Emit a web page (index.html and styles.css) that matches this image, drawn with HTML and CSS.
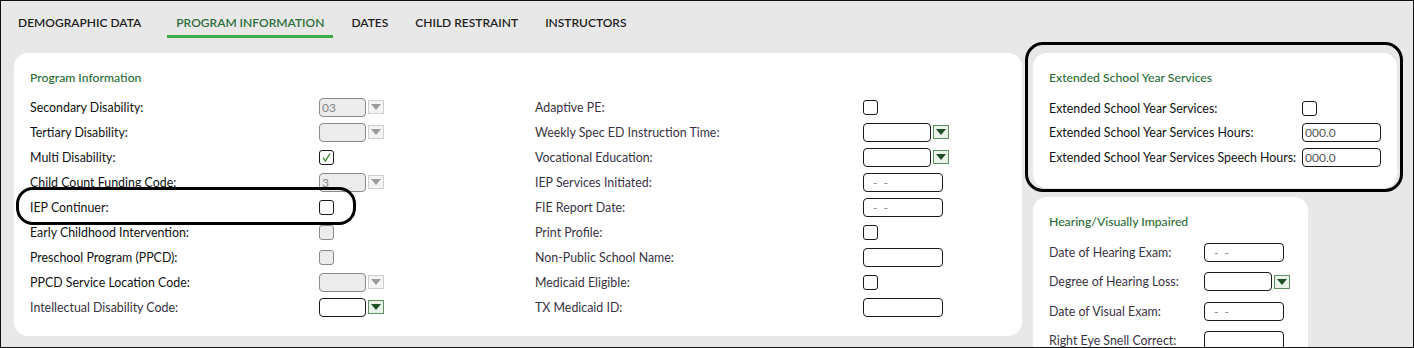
FILE: index.html
```html
<!DOCTYPE html>
<html lang="en">
<head>
<meta charset="utf-8">
<title>Program Information</title>
<link rel="stylesheet" href="styles.css">
</head>
<body>
<div class="frame">
  <nav class="tabs">
    <span class="tab first">DEMOGRAPHIC DATA</span>
    <span class="tab active">PROGRAM INFORMATION</span>
    <span class="tab">DATES</span>
    <span class="tab">CHILD RESTRAINT</span>
    <span class="tab">INSTRUCTORS</span>
  </nav>
  <div class="content">
    <section class="card main">
      <h2 class="card-title">Program Information</h2>
      <div class="cols">
        <div class="col col-left">
          <div class="row"><span class="label strong">Secondary Disability:</span><span class="sel disabled"><span class="sel-box">03</span><span class="arrow"><svg viewBox="0 0 10 6" width="10" height="6"><path d="M0 0H10L5 6Z"/></svg></span></span></div>
          <div class="row"><span class="label strong">Tertiary Disability:</span><span class="sel disabled"><span class="sel-box"></span><span class="arrow"><svg viewBox="0 0 10 6" width="10" height="6"><path d="M0 0H10L5 6Z"/></svg></span></span></div>
          <div class="row"><span class="label strong">Multi Disability:</span><span class="cb"><svg viewBox="0 0 15 15" width="15" height="15"><path d="M4 7.5 L6.3 11 L11 3.5" fill="none" stroke="#3a7d2a" stroke-width="1.3"/></svg></span></div>
          <div class="row"><span class="label strong">Child Count Funding Code:</span><span class="sel disabled"><span class="sel-box">3</span><span class="arrow"><svg viewBox="0 0 10 6" width="10" height="6"><path d="M0 0H10L5 6Z"/></svg></span></span></div>
          <div class="row marked"><span class="label strong">IEP Continuer:</span><span class="cb"></span></div>
          <div class="row"><span class="label strong">Early Childhood Intervention:</span><span class="cb disabled"></span></div>
          <div class="row"><span class="label strong">Preschool Program (PPCD):</span><span class="cb disabled"></span></div>
          <div class="row"><span class="label strong">PPCD Service Location Code:</span><span class="sel disabled"><span class="sel-box"></span><span class="arrow"><svg viewBox="0 0 10 6" width="10" height="6"><path d="M0 0H10L5 6Z"/></svg></span></span></div>
          <div class="row"><span class="label">Intellectual Disability Code:</span><span class="sel"><span class="sel-box"></span><span class="arrow"><svg viewBox="0 0 10 6" width="10" height="6"><path d="M0 0H10L5 6Z"/></svg></span></span></div>
        </div>
        <div class="col col-right">
          <div class="row"><span class="label">Adaptive PE:</span><span class="cb"></span></div>
          <div class="row"><span class="label">Weekly Spec ED Instruction Time:</span><span class="sel wide"><span class="sel-box"></span><span class="arrow"><svg viewBox="0 0 10 6" width="10" height="6"><path d="M0 0H10L5 6Z"/></svg></span></span></div>
          <div class="row"><span class="label">Vocational Education:</span><span class="sel wide"><span class="sel-box"></span><span class="arrow"><svg viewBox="0 0 10 6" width="10" height="6"><path d="M0 0H10L5 6Z"/></svg></span></span></div>
          <div class="row"><span class="label">IEP Services Initiated:</span><span class="txt date">-&nbsp;&nbsp;-</span></div>
          <div class="row"><span class="label">FIE Report Date:</span><span class="txt date">-&nbsp;&nbsp;-</span></div>
          <div class="row"><span class="label">Print Profile:</span><span class="cb"></span></div>
          <div class="row"><span class="label">Non-Public School Name:</span><span class="txt"></span></div>
          <div class="row"><span class="label">Medicaid Eligible:</span><span class="cb"></span></div>
          <div class="row"><span class="label">TX Medicaid ID:</span><span class="txt"></span></div>
        </div>
      </div>
    </section>
    <div class="side">
      <section class="card esy marked-card">
        <h2 class="card-title">Extended School Year Services</h2>
        <div class="row"><span class="label strong">Extended School Year Services:</span><span class="cb"></span></div>
        <div class="row"><span class="label strong">Extended School Year Services Hours:</span><span class="txt num">000.0</span></div>
        <div class="row"><span class="label strong">Extended School Year Services Speech Hours:</span><span class="txt num">000.0</span></div>
      </section>
      <section class="card hearing">
        <h2 class="card-title">Hearing/Visually Impaired</h2>
        <div class="row"><span class="label">Date of Hearing Exam:</span><span class="txt date">-&nbsp;&nbsp;-</span></div>
        <div class="row"><span class="label">Degree of Hearing Loss:</span><span class="sel wide"><span class="sel-box"></span><span class="arrow"><svg viewBox="0 0 10 6" width="10" height="6"><path d="M0 0H10L5 6Z"/></svg></span></span></div>
        <div class="row"><span class="label">Date of Visual Exam:</span><span class="txt date">-&nbsp;&nbsp;-</span></div>
        <div class="row"><span class="label">Right Eye Snell Correct:</span><span class="txt"></span></div>
      </section>
    </div>
  </div>
</div>
</body>
</html>
```
FILE: styles.css
```css
html, body {
  margin: 0;
  padding: 0;
  overflow: hidden;
}
body {
  font-family: "Lato", "Open Sans", sans-serif;
  font-size: 12.4px;
  color: #1c1c1c;
  background: #e8e8e8;
}
.frame {
  box-sizing: border-box;
  width: 1414px;
  height: 348px;
  border: 1px solid #111;
  background: #e8e8e8;
  overflow: hidden;
}
.tabs {
  display: flex;
  gap: 9px;
  padding-left: 8px;
  height: 37px;
}
.tab {
  box-sizing: border-box;
  height: 37px;
  padding: 14px 9px 4px;
  line-height: 16px;
  font-size: 12px;
  font-weight: 600;
  color: #1e1e1e;
  border-bottom: 3px solid transparent;
  white-space: nowrap;
}
.tab.first { margin-right: 8px; }
.tab.active {
  color: #2e6e3c;
  border-bottom-color: #3cab4a;
}
.content {
  display: flex;
  align-items: flex-start;
  gap: 11px;
  margin-top: 15px;
  padding-left: 13px;
}
.card {
  background: #fff;
  border-radius: 14px;
  box-sizing: border-box;
}
.card-title {
  margin: 0 0 8.5px;
  font-size: 12.2px;
  font-weight: 500;
  line-height: 16px;
  color: #2a6b36;
}
.main {
  width: 1008px;
  padding: 17px 16px 16.5px;
}
.cols {
  display: flex;
}
.col-left { width: 505px; }
.col-left .label { width: 289px; }
.col-right .label { width: 328px; }
.row {
  display: flex;
  align-items: center;
  height: 25px;
  position: relative;
}
.label {
  flex: none;
  white-space: nowrap;
  color: #3a3344;
}
.label.strong {
  color: #121212;
}
.marked::after {
  content: "";
  position: absolute;
  left: -14px;
  top: -7.5px;
  width: 334px;
  height: 32px;
  border: 3px solid #000;
  border-radius: 17px;
  pointer-events: none;
}
/* select */
.sel {
  display: flex;
  align-items: center;
  gap: 2px;
}
.sel-box {
  box-sizing: border-box;
  width: 47px;
  height: 19px;
  border: 1px solid #1a1a1a;
  border-radius: 4px;
  background: #fff;
  padding-left: 2px;
  line-height: 17px;
  font-size: 12px;
  color: #888;
}
.sel.wide .sel-box { width: 68px; }
.arrow {
  box-sizing: border-box;
  width: 16px;
  height: 14px;
  border: 1px solid #5f8f63;
  background: #eaf2ea;
  display: flex;
  align-items: center;
  justify-content: center;
}
.arrow svg { fill: #1e4f26; }
.sel.disabled .sel-box {
  background: #ececec;
  border-color: #8a8a8a;
}
.sel.disabled .arrow {
  border-color: #cfcfcf;
  background: #f4f4f4;
}
.sel.disabled .arrow svg { fill: #9b9b9b; }
/* checkbox */
.cb {
  box-sizing: border-box;
  width: 15px;
  height: 15px;
  border: 1px solid #1a1a1a;
  border-radius: 3px;
  background: #fff;
  display: block;
  position: relative;
}
.cb svg { position: absolute; left: -1px; top: -1px; }
.cb.disabled {
  background: #ececec;
  border-color: #8a8a8a;
}
/* text input */
.txt {
  box-sizing: border-box;
  width: 80px;
  height: 19px;
  border: 1px solid #1a1a1a;
  border-radius: 4px;
  background: #fff;
  line-height: 17px;
  white-space: nowrap;
  font-size: 12px;
}
.txt.date {
  padding-left: 9px;
  color: #888;
}
.txt.num {
  padding-left: 2px;
  color: #555;
}
/* side column */
.side {
  display: flex;
  flex-direction: column;
  gap: 9px;
}
.esy {
  width: 364px;
  padding: 17px 16px 18.5px;
  position: relative;
}
.esy .card-title { margin-bottom: 10px; }
.esy .label { width: 253px; }
.esy .row { height: 24.5px; }
.marked-card::after {
  content: "";
  position: absolute;
  left: -8px;
  top: -11px;
  right: -6px;
  bottom: -4px;
  border: 3.5px solid #000;
  border-radius: 18px;
  pointer-events: none;
}
.hearing {
  width: 275px;
  padding: 17px 16px 12px;
}
.hearing .card-title { margin-bottom: 7.5px; }
.hearing .label { width: 155px; }
.hearing .row { height: 29.5px; }
```
